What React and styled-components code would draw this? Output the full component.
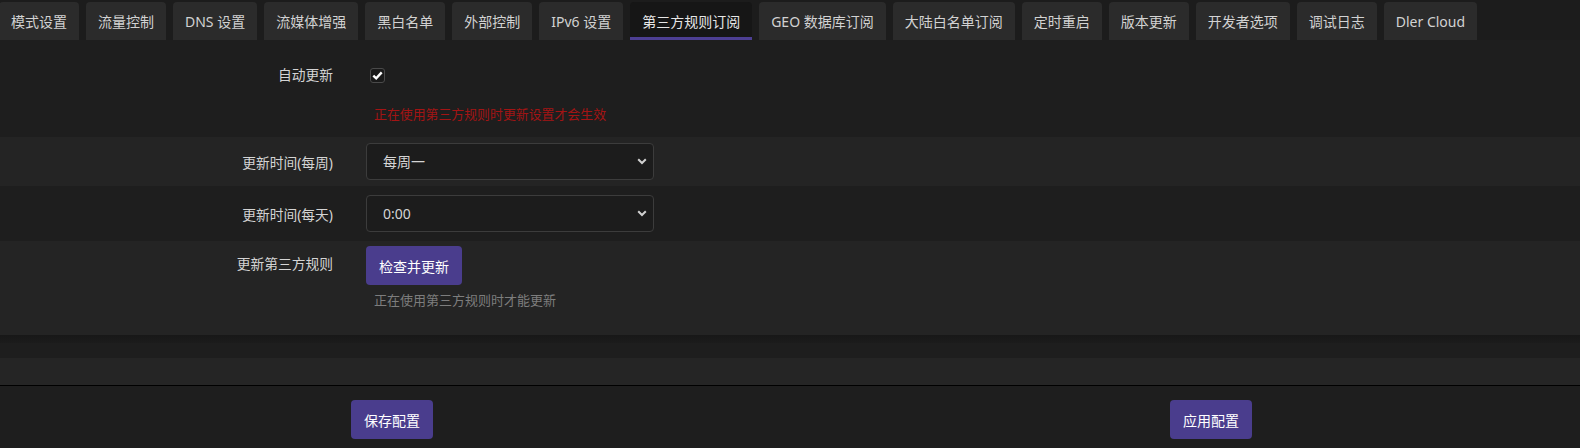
import React from "react";
import styled, { createGlobalStyle } from "styled-components";

const GlobalStyle = createGlobalStyle`
  html, body {
    margin: 0;
    padding: 0;
    background: #1e1e1e;
    font-family: "Noto Sans", "Noto Sans CJK SC", sans-serif;
    color: #cccccc;
  }
`;

const tabs = [
  "模式设置",
  "流量控制",
  "DNS 设置",
  "流媒体增强",
  "黑白名单",
  "外部控制",
  "IPv6 设置",
  "第三方规则订阅",
  "GEO 数据库订阅",
  "大陆白名单订阅",
  "定时重启",
  "版本更新",
  "开发者选项",
  "调试日志",
  "Dler Cloud",
];

function Chevron() {
  return (
    <svg width="10" height="7" viewBox="0 0 10 7">
      <path d="M1.2 1.2 L5 5 L8.8 1.2" fill="none" stroke="#d0d0d0" strokeWidth="2" />
    </svg>
  );
}

class App extends React.Component {
  render() {
    return (
      <Page>
        <GlobalStyle />
        <TabBar>
          {tabs.map((t, i) => (
            <Tab key={t} active={i === 7}>
              {t}
            </Tab>
          ))}
        </TabBar>

        <Row height="97px" align="start">
          <Label style={{ paddingTop: "24px" }}>自动更新</Label>
          <Value>
            <CheckLine>
              <CheckBox>
                <svg width="11" height="9" viewBox="0 0 11 9">
                  <path d="M1.3 4.6 L4.2 7.3 L9.7 1.4" fill="none" stroke="#ffffff" strokeWidth="2.4" />
                </svg>
              </CheckBox>
            </CheckLine>
            <Warn>正在使用第三方规则时更新设置才会生效</Warn>
          </Value>
        </Row>

        <Row height="49px" light>
          <Label>更新时间(每周)</Label>
          <Value>
            <SelectWrap>
              <Select defaultValue="1">
                <option value="1">每周一</option>
              </Select>
              <Arrow>
                <Chevron />
              </Arrow>
            </SelectWrap>
          </Value>
        </Row>

        <Row height="55px">
          <Label>更新时间(每天)</Label>
          <Value>
            <SelectWrap>
              <Select defaultValue="0">
                <option value="0">0:00</option>
              </Select>
              <Arrow>
                <Chevron />
              </Arrow>
            </SelectWrap>
          </Value>
        </Row>

        <Row height="94px" light align="start">
          <Label style={{ paddingTop: "12px" }}>更新第三方规则</Label>
          <Value style={{ paddingTop: "5px" }}>
            <Button>检查并更新</Button>
            <Hint>正在使用第三方规则时才能更新</Hint>
          </Value>
        </Row>

        <Shadow />
        <Spacer />
        <Band />

        <Footer>
          <Button wide>保存配置</Button>
          <Button wide>应用配置</Button>
        </Footer>
      </Page>
    );
  }
}

const Page = styled.div`
  width: 1580px;
  height: 448px;
  overflow: hidden;
  background: #1e1e1e;
`;

const TabBar = styled.div`
  display: flex;
  gap: 7px;
  height: 40px;
  padding-top: 2px;
  box-sizing: border-box;
  margin-left: -1px;
  background: #1c1c1c;
`;

const Tab = styled.div`
  flex: none;
  height: 38px;
  box-sizing: border-box;
  padding: 3px 12px 0;
  display: flex;
  align-items: center;
  font-size: 14px;
  color: ${(p) => (p.active ? "#e6e6e6" : "#d2d2d2")};
  background: ${(p) => (p.active ? "#161616" : "#2b2b2b")};
  border-radius: 4px 4px 0 0;
  border-bottom: 3px solid ${(p) => (p.active ? "#4d3f93" : "transparent")};
  white-space: nowrap;
`;

const Row = styled.div`
  display: grid;
  grid-template-columns: 333px 288px;
  column-gap: 33px;
  align-items: ${(p) => (p.align === "start" ? "start" : "center")};
  height: ${(p) => p.height};
  background: ${(p) => (p.light ? "#242424" : "#1e1e1e")};
`;

const Label = styled.div`
  text-align: right;
  font-size: 13.75px;
  color: #d4d4d4;
  white-space: nowrap;
`;

const Value = styled.div`
  display: flex;
  flex-direction: column;
  align-items: flex-start;
`;

const CheckLine = styled.div`
  height: 30px;
  margin-top: 20px;
  display: flex;
  align-items: center;
  padding-left: 4px;
`;

const CheckBox = styled.div`
  width: 15px;
  height: 15px;
  box-sizing: border-box;
  border: 1px solid #4a4a4a;
  border-radius: 3px;
  background: #1a1a1a;
  display: flex;
  align-items: center;
  justify-content: center;
`;

const Warn = styled.div`
  margin-top: 14px;
  padding-left: 8px;
  font-size: 12.9px;
  line-height: 20px;
  color: #a31414;
  white-space: nowrap;
`;

const SelectWrap = styled.div`
  position: relative;
  width: 288px;
`;

const Select = styled.select`
  appearance: none;
  width: 100%;
  height: 37px;
  box-sizing: border-box;
  background: #1c1c1c;
  border: 1px solid #3c3c3c;
  border-radius: 4px;
  color: #d4d4d4;
  font-family: "Noto Sans", "Noto Sans CJK SC", sans-serif;
  font-size: 14px;
  padding: 0 16px;
  outline: none;
`;

const Arrow = styled.span`
  position: absolute;
  right: 7px;
  top: 15px;
  pointer-events: none;
  display: flex;
`;

const Button = styled.button`
  height: 39px;
  width: ${(p) => (p.wide ? "82px" : "96px")};
  border: none;
  border-radius: 4px;
  background: #4a3d8d;
  color: #ffffff;
  font-family: "Noto Sans", "Noto Sans CJK SC", sans-serif;
  font-size: 14px;
  padding: 0;
  cursor: pointer;
`;

const Hint = styled.div`
  margin-top: 6px;
  padding-left: 8px;
  font-size: 13px;
  line-height: 18px;
  color: #7d7d7d;
  white-space: nowrap;
`;

const Shadow = styled.div`
  height: 8px;
  background: linear-gradient(#181818, #1c1c1c);
`;

const Spacer = styled.div`
  height: 15px;
  background: #1e1e1e;
`;

const Band = styled.div`
  height: 27px;
  background: #252525;
  border-bottom: 1px solid #000000;
`;

const Footer = styled.div`
  display: flex;
  padding: 14px 0 0 351px;
  gap: 737px;
`;

export default App;
